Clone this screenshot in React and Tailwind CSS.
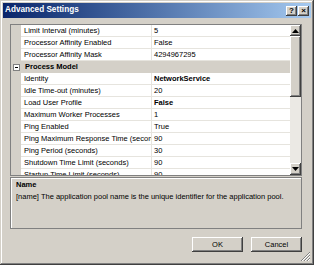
const raised =
  "shadow-[inset_-1px_-1px_#404040,inset_1px_1px_#ffffff,inset_-2px_-2px_#808080,inset_2px_2px_#d4d0c8]";

const rows = [
  { n: "Limit Interval (minutes)", v: "5" },
  { n: "Processor Affinity Enabled", v: "False" },
  { n: "Processor Affinity Mask", v: "4294967295" },
  { cat: "Process Model" },
  { n: "Identity", v: "NetworkService", b: true },
  { n: "Idle Time-out (minutes)", v: "20" },
  { n: "Load User Profile", v: "False", b: true },
  { n: "Maximum Worker Processes", v: "1" },
  { n: "Ping Enabled", v: "True" },
  { n: "Ping Maximum Response Time (seconds)", v: "90" },
  { n: "Ping Period (seconds)", v: "30" },
  { n: "Shutdown Time Limit (seconds)", v: "90" },
  { n: "Startup Time Limit (seconds)", v: "90" },
];

function TitleBtn({ children }) {
  return (
    <div
      className={`w-[11px] h-[10px] bg-[#d4d0c8] ${raised} flex items-center justify-center text-[8px] font-bold leading-none text-black`}
    >
      {children}
    </div>
  );
}

function Arrow({ up }) {
  return (
    <svg width="7" height="4" viewBox="0 0 7 4">
      {up ? <path d="M3.5 0 L7 4 L0 4 Z" fill="#000" /> : <path d="M0 0 L7 0 L3.5 4 Z" fill="#000" />}
    </svg>
  );
}

function Row({ r }) {
  if (r.cat) {
    return (
      <div className="h-[12px] shrink-0 flex items-center bg-[#d4d0c8]">
        <div className="w-[10px] flex items-center justify-center">
          <div className="w-[7px] h-[7px] border border-[#808080] bg-white flex items-center justify-center">
            <div className="w-[3px] h-[1px] bg-black" />
          </div>
        </div>
        <span className="pl-[4px] text-[7.5px] font-bold leading-none">{r.cat}</span>
      </div>
    );
  }
  return (
    <div className="h-[12px] shrink-0 flex">
      <div className="w-[10px] shrink-0 bg-[#d4d0c8]" />
      <div className="w-[131px] shrink-0 border-b border-r border-[#e6e4de] pl-[3px] text-[7.5px] leading-[11px] whitespace-nowrap overflow-hidden">
        {r.n}
      </div>
      <div
        className={`flex-1 border-b border-[#e6e4de] pl-[2px] text-[7.5px] leading-[11px] whitespace-nowrap overflow-hidden ${r.b ? "font-bold" : ""}`}
      >
        {r.v}
      </div>
    </div>
  );
}

export default function App() {
  return (
    <div className="w-[314px] h-[265px] relative bg-[#d4d0c8] font-['Liberation_Sans',Arial,sans-serif] text-black shadow-[inset_-1px_-1px_#404040,inset_1px_1px_#d4d0c8,inset_-2px_-2px_#808080,inset_2px_2px_#ffffff] p-[3px] flex flex-col">
      <div className="h-[15px] shrink-0 flex items-center justify-between pl-[2px] pr-[2px] bg-linear-to-r from-[#0a246a] to-[#a6caf0]">
        <span className="text-white font-bold text-[8.2px] leading-none">Advanced Settings</span>
        <div className="flex gap-[1px]">
          <TitleBtn>?</TitleBtn>
          <TitleBtn>×</TitleBtn>
        </div>
      </div>

      <div className="mt-[6px] ml-[7px] mr-[9px] h-[152px] shrink-0 border border-[#808080] bg-white flex overflow-hidden">
        <div className="flex-1 flex flex-col overflow-hidden">
          {rows.map((r, i) => (
            <Row key={i} r={r} />
          ))}
        </div>
        <div className="w-[11px] shrink-0 flex flex-col">
          <div className={`h-[11px] shrink-0 bg-[#d4d0c8] ${raised} flex items-center justify-center`}>
            <Arrow up />
          </div>
          <div className={`h-[61px] shrink-0 bg-[#d4d0c8] ${raised}`} />
          <div className="flex-1 bg-[#ebe9e4]" />
          <div className={`h-[12px] shrink-0 bg-[#d4d0c8] ${raised} flex items-center justify-center`}>
            <Arrow />
          </div>
        </div>
      </div>

      <div className="mt-[1px] ml-[7px] mr-[9px] h-[52px] shrink-0 border border-[#808080] shadow-[inset_1px_1px_#ffffff] px-[5px] pt-[2px] flex flex-col gap-[3px]">
        <span className="text-[7.5px] font-bold leading-[9px]">Name</span>
        <span className="text-[7.5px] leading-[9px] whitespace-nowrap">
          [name] The application pool name is the unique identifier for the application pool.
        </span>
      </div>

      <div className="mt-[8px] mr-[9px] flex justify-end gap-[8px]">
        <div className={`w-[51px] h-[15px] bg-[#d4d0c8] ${raised} flex items-center justify-center text-[7.5px] leading-none`}>
          OK
        </div>
        <div className={`w-[51px] h-[15px] bg-[#d4d0c8] ${raised} flex items-center justify-center text-[7.5px] leading-none`}>
          Cancel
        </div>
      </div>

      <svg className="absolute right-[3px] bottom-[3px]" width="11" height="11" viewBox="0 0 11 11">
        <path d="M10 1 L1 10 M10 4 L4 10 M10 7 L7 10" stroke="#808080" strokeWidth="1" />
        <path d="M10 2 L2 10 M10 5 L5 10 M10 8 L8 10" stroke="#ffffff" strokeWidth="1" />
      </svg>
    </div>
  );
}
